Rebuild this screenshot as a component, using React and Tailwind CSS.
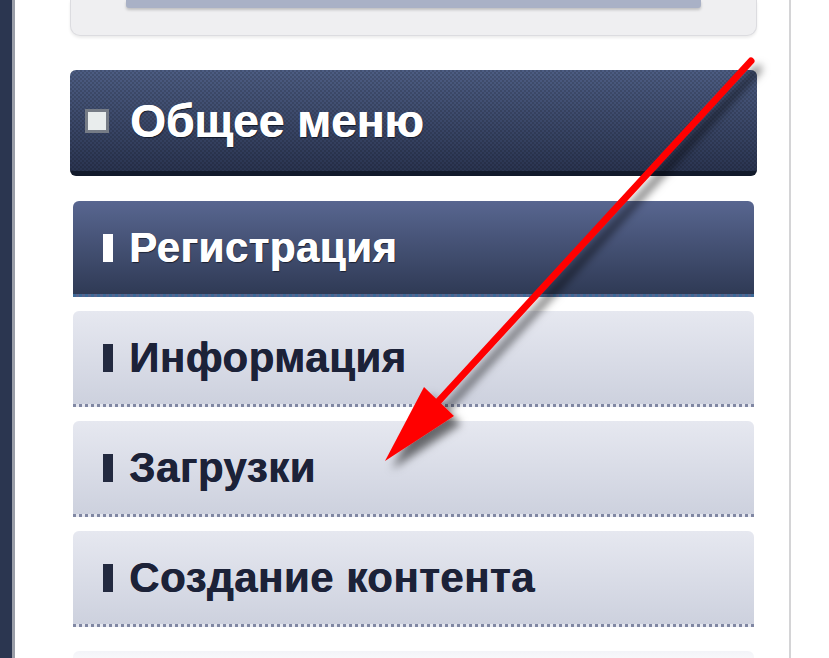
import React from 'react'

const items = [
  { label: 'Регистрация', active: true },
  { label: 'Информация' },
  { label: 'Загрузки' },
  { label: 'Создание контента' },
]

function MenuItem({ label, active }) {
  if (active) {
    return (
      <div className="flex h-[96px] shrink-0 items-center rounded-t-[6px] border-b-[3px] border-dotted border-[#3d6a98] bg-[linear-gradient(#586690,#2f3a55)] pl-[30px]">
        <span className="mr-[16px] h-[28px] w-[10px] bg-white" />
        <span className="text-[42px] font-bold leading-none tracking-[0.5px] text-white [text-shadow:0.6px_0_0_#fff,1px_1px_1px_#1a2030]">{label}</span>
      </div>
    )
  }
  return (
    <div className="flex h-[96px] shrink-0 items-center rounded-t-[6px] border-b-[3px] border-dotted border-[#8087a3] bg-[linear-gradient(#e6e8f0,#cdd1de)] pl-[30px]">
      <span className="mr-[16px] h-[28px] w-[10px] bg-[#232a40]" />
      <span className="text-[42px] font-bold leading-none tracking-[0.5px] text-[#1c2238] [text-shadow:0.6px_0_0_#1c2238]">{label}</span>
    </div>
  )
}

export default function App() {
  return (
    <div className="relative flex h-[658px] w-[829px] overflow-hidden bg-white font-['Liberation_Sans',Arial,sans-serif]">
      <div className="w-[12px] shrink-0 bg-[#2b3650]" />
      <div className="w-[3px] shrink-0 bg-[#9a9ea8]" />

      <div className="ml-[55px] flex w-[687px] shrink-0 flex-col">
        <div className="h-[36px] shrink-0 rounded-b-[10px] border-x border-b border-[#dcdce0] bg-[#efeff1] shadow-[0_2px_3px_rgba(0,0,0,0.08)]">
          <div className="ml-[55px] h-[8px] w-[575px] rounded-b-[3px] bg-[#a9b1c6] shadow-[0_2px_3px_rgba(0,0,0,0.2)]" />
        </div>

        <div className="mt-[34px] flex h-[106px] shrink-0 items-center rounded-[6px] border-b-[5px] border-[#121a2b] pl-[15px] [background:repeating-conic-gradient(rgba(0,0,0,0.14)_0_25%,transparent_0_50%)_0_0/4px_4px,linear-gradient(#4d5d83,#2a3450)]">
          <span className="mr-[21px] h-[24px] w-[24px] border-[3px] border-[#767c86] bg-[#e9eded]" />
          <span className="text-[46px] font-bold leading-none text-white [text-shadow:0.6px_0_0_#fff,1px_1px_1px_#101828]">Общее меню</span>
        </div>

        <div className="mx-[3px] mt-[25px] flex shrink-0 flex-col gap-[14px]">
          {items.map((item) => (
            <MenuItem key={item.label} label={item.label} active={item.active} />
          ))}
          <div className="mt-[10px] h-[20px] shrink-0 rounded-t-[6px] bg-[linear-gradient(#f3f4f8,#ffffff)]" />
        </div>
      </div>

      <div className="ml-[32px] w-[2px] shrink-0 bg-[#d4d4d6]" />

      <svg className="pointer-events-none absolute left-0 top-0" width="829" height="658">
        <defs>
          <filter id="shadow" x="-20%" y="-20%" width="140%" height="140%">
            <feDropShadow dx="7" dy="8" stdDeviation="4" floodColor="#000" floodOpacity="0.55" />
          </filter>
        </defs>
        <g filter="url(#shadow)">
          <line x1="751" y1="61" x2="436" y2="404" stroke="#ff0000" strokeWidth="7" strokeLinecap="round" />
          <polygon points="385,461 424,387 454,416" fill="#ff0000" />
        </g>
      </svg>
    </div>
  )
}
